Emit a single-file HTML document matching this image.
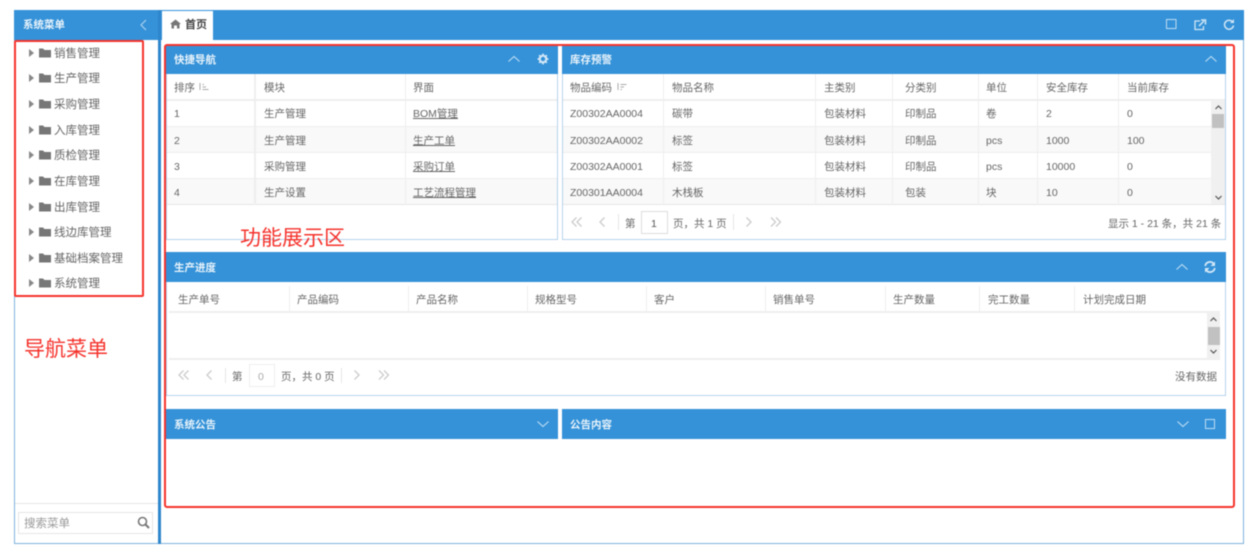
<!DOCTYPE html>
<html lang="zh">
<head>
<meta charset="utf-8">
<title>首页</title>
<style>
html,body{margin:0;padding:0;background:#fff;}
#r{position:relative;width:1254px;height:556px;overflow:hidden;background:#fff;font-family:"Liberation Sans","Noto Sans CJK SC",sans-serif;font-size:10.5px;color:#666;filter:blur(.5px);}
#r div,#r span.t,#r svg{position:absolute;}
.t{position:absolute;line-height:16px;white-space:nowrap;margin-top:1px;}
.b{background:#3592d8;}
.w{color:#e8f3fb;font-weight:bold;font-size:10.5px;}
.m{font-size:11.5px;color:#666;margin-top:1px;}
.l{background:#e6e6e6;}
.u{text-decoration:underline;}
.h{background:#eee;}
.z{background:#f9f9f9;}
svg{overflow:visible;fill:none;}
</style>
</head>
<body>
<div id="r">
<!-- outer frame -->
<div style="left:14px;top:10px;width:1228px;height:532px;border:1px solid #7fb2dc;"></div>
<div class="b" style="left:14px;top:10px;width:144px;height:30px;"></div>
<div style="left:158px;top:10px;width:3px;height:534px;background:#2e86cc;"></div>
<div class="b" style="left:161px;top:10px;width:1083px;height:30px;"></div>
<div style="left:162px;top:11px;width:51px;height:29px;background:#fff;"></div>

<span class="t w" style="left:23px;top:16px;">系统菜单</span>
<svg style="left:139px;top:19px;" width="9" height="12"><path d="M7 1L2 6l5 5" stroke="#a9d0ee" stroke-width="1.2"/></svg>
<svg style="left:170px;top:19px;" width="12" height="10"><path d="M0 5L5.500 0.500 11 5H9.500V9.500H7V6.500H4V9.500H1.500V5Z" fill="#777"/></svg>
<span class="t" style="left:185px;top:16px;font-weight:bold;color:#444;font-size:11px;">首页</span>
<svg style="left:1166px;top:19px;" width="12" height="11"><rect x=".5" y=".5" width="9.500" height="9" stroke="#bcdcf3"/></svg>
<svg style="left:1194px;top:19px;" width="13" height="12"><path d="M6 2H1V10.500H9.500V7" stroke="#cfe5f6" stroke-width="1.300"/><path d="M5 7L10 2M7 1h4.500v4.500" stroke="#cfe5f6" stroke-width="1.500"/></svg>
<svg style="left:1223px;top:19px;" width="12" height="12"><path d="M9.800 3.200A4.500 4.500 0 1 0 10.500 6.500" stroke="#cfe5f6" stroke-width="1.500"/><path d="M7 4H11V0Z" fill="#cfe5f6"/></svg>

<!-- sidebar menu -->
<span class="t m" style="left:54px;top:45px;">销售管理</span>
<span class="t m" style="left:54px;top:70px;">生产管理</span>
<span class="t m" style="left:54px;top:96px;">采购管理</span>
<span class="t m" style="left:54px;top:122px;">入库管理</span>
<span class="t m" style="left:54px;top:147px;">质检管理</span>
<span class="t m" style="left:54px;top:173px;">在库管理</span>
<span class="t m" style="left:54px;top:199px;">出库管理</span>
<span class="t m" style="left:54px;top:224px;">线边库管理</span>
<span class="t m" style="left:54px;top:250px;">基础档案管理</span>
<span class="t m" style="left:54px;top:275px;">系统管理</span>
<svg style="left:28px;top:48px;" width="24" height="10"><path d="M1 1l5 4-5 4z" fill="#888"/><path d="M11 .5h4l1.500 1.500H23V9.500H11z" fill="#777"/></svg>
<svg style="left:28px;top:73px;" width="24" height="10"><path d="M1 1l5 4-5 4z" fill="#888"/><path d="M11 .5h4l1.500 1.500H23V9.500H11z" fill="#777"/></svg>
<svg style="left:28px;top:99px;" width="24" height="10"><path d="M1 1l5 4-5 4z" fill="#888"/><path d="M11 .5h4l1.500 1.500H23V9.500H11z" fill="#777"/></svg>
<svg style="left:28px;top:125px;" width="24" height="10"><path d="M1 1l5 4-5 4z" fill="#888"/><path d="M11 .5h4l1.500 1.500H23V9.500H11z" fill="#777"/></svg>
<svg style="left:28px;top:150px;" width="24" height="10"><path d="M1 1l5 4-5 4z" fill="#888"/><path d="M11 .5h4l1.500 1.500H23V9.500H11z" fill="#777"/></svg>
<svg style="left:28px;top:176px;" width="24" height="10"><path d="M1 1l5 4-5 4z" fill="#888"/><path d="M11 .5h4l1.500 1.500H23V9.500H11z" fill="#777"/></svg>
<svg style="left:28px;top:202px;" width="24" height="10"><path d="M1 1l5 4-5 4z" fill="#888"/><path d="M11 .5h4l1.500 1.500H23V9.500H11z" fill="#777"/></svg>
<svg style="left:28px;top:227px;" width="24" height="10"><path d="M1 1l5 4-5 4z" fill="#888"/><path d="M11 .5h4l1.500 1.500H23V9.500H11z" fill="#777"/></svg>
<svg style="left:28px;top:253px;" width="24" height="10"><path d="M1 1l5 4-5 4z" fill="#888"/><path d="M11 .5h4l1.500 1.500H23V9.500H11z" fill="#777"/></svg>
<svg style="left:28px;top:278px;" width="24" height="10"><path d="M1 1l5 4-5 4z" fill="#888"/><path d="M11 .5h4l1.500 1.500H23V9.500H11z" fill="#777"/></svg>

<span class="t" style="left:24px;top:336px;font-size:21px;line-height:26px;color:#f5332d;">导航菜单</span>

<div class="l" style="left:15px;top:503px;width:143px;height:1px;"></div>
<div style="left:18px;top:512px;width:133px;height:20px;border:2px solid #e6e6e6;border-width:1.500px;"></div>
<span class="t" style="left:24px;top:515px;font-size:11.5px;color:#999;">搜索菜单</span>
<svg style="left:137px;top:516px;" width="13" height="13"><circle cx="5.500" cy="5.500" r="4" stroke="#777" stroke-width="1.600"/><path d="M8.500 8.500L12 12" stroke="#777" stroke-width="2"/></svg>

<!-- panel 1 -->
<div style="left:166px;top:46px;width:390px;height:193px;border:1px solid #b5d3ec;border-top:0;"></div>
<div class="b" style="left:166px;top:46px;width:392px;height:28px;"></div>
<span class="t w" style="left:174px;top:51px;">快捷导航</span>
<svg style="left:508px;top:55px;" width="12" height="8"><path d="M.5 6.500L6 1.500l5.500 5" stroke="#bcdcf3" stroke-width="1.100"/></svg>
<svg style="left:537px;top:53px;" width="12" height="12"><circle cx="6" cy="6" r="3.300" stroke="#d3e7f7" stroke-width="2.200"/><path d="M6 .5v2M6 9.500v2M.5 6h2M9.500 6h2M2.100 2.100l1.400 1.400M8.500 8.500l1.400 1.400M2.100 9.900l1.400-1.400M8.500 3.500l1.400-1.400" stroke="#d3e7f7" stroke-width="1.500"/></svg>

<div class="z" style="left:167px;top:126px;width:390px;height:27px;"></div>
<div class="z" style="left:167px;top:179px;width:390px;height:26px;"></div>
<div class="h" style="left:167px;top:99px;width:390px;height:2px;"></div>
<div class="h" style="left:167px;top:126px;width:390px;height:1px;"></div>
<div class="h" style="left:167px;top:152px;width:390px;height:1px;"></div>
<div class="h" style="left:167px;top:178px;width:390px;height:1px;"></div>
<div class="l" style="left:167px;top:204px;width:390px;height:1px;"></div>
<div class="h" style="left:254px;top:74px;width:2px;height:131px;"></div>
<div class="h" style="left:405px;top:74px;width:1px;height:131px;"></div>

<span class="t" style="left:174px;top:79px;">排序</span>
<svg style="left:199px;top:83px;" width="10" height="8"><path d="M1 0v7M3.500 1.500H5M3.500 4H7M3.500 6.500H9.500" stroke="#aaa"/></svg>
<span class="t" style="left:264px;top:79px;">模块</span>
<span class="t" style="left:413px;top:79px;">界面</span>
<span class="t" style="left:174px;top:105px;">1</span>
<span class="t" style="left:264px;top:105px;">生产管理</span>
<span class="t u" style="left:413px;top:105px;">BOM管理</span>
<span class="t" style="left:174px;top:132px;">2</span>
<span class="t" style="left:264px;top:132px;">生产管理</span>
<span class="t u" style="left:413px;top:132px;">生产工单</span>
<span class="t" style="left:174px;top:158px;">3</span>
<span class="t" style="left:264px;top:158px;">采购管理</span>
<span class="t u" style="left:413px;top:158px;">采购订单</span>
<span class="t" style="left:174px;top:184px;">4</span>
<span class="t" style="left:264px;top:184px;">生产设置</span>
<span class="t u" style="left:413px;top:184px;">工艺流程管理</span>

<span class="t" style="left:240px;top:225px;font-size:21px;line-height:26px;color:#f5332d;">功能展示区</span>

<!-- panel 2 -->
<div style="left:562px;top:46px;width:662px;height:193px;border:1px solid #b5d3ec;border-top:0;"></div>
<div class="b" style="left:562px;top:46px;width:664px;height:28px;"></div>
<span class="t w" style="left:570px;top:51px;">库存预警</span>
<svg style="left:1205px;top:55px;" width="12" height="8"><path d="M.5 6.500L6 1.500l5.500 5" stroke="#bcdcf3" stroke-width="1.100"/></svg>

<div class="z" style="left:563px;top:126px;width:648px;height:27px;"></div>
<div class="z" style="left:563px;top:179px;width:648px;height:26px;"></div>
<div class="h" style="left:563px;top:99px;width:662px;height:2px;"></div>
<div class="h" style="left:563px;top:126px;width:648px;height:1px;"></div>
<div class="h" style="left:563px;top:152px;width:648px;height:1px;"></div>
<div class="h" style="left:563px;top:178px;width:648px;height:1px;"></div>
<div class="l" style="left:563px;top:204px;width:662px;height:1px;"></div>
<div class="h" style="left:663px;top:74px;width:1px;height:131px;"></div>
<div class="h" style="left:815px;top:74px;width:1px;height:131px;"></div>
<div class="h" style="left:892px;top:74px;width:1px;height:131px;"></div>
<div class="h" style="left:978px;top:74px;width:1px;height:131px;"></div>
<div class="h" style="left:1037px;top:74px;width:1px;height:131px;"></div>
<div class="h" style="left:1118px;top:74px;width:1px;height:131px;"></div>
<!-- scrollbar -->
<div style="left:1211px;top:100px;width:14px;height:104px;background:#f0f0f0;"></div>
<div style="left:1212px;top:114px;width:12px;height:14px;background:#c1c1c1;"></div>
<svg style="left:1215px;top:105px;" width="7" height="5"><path d="M.5 4L3.500 1l3 3" stroke="#555" stroke-width="1.200"/></svg>
<svg style="left:1215px;top:195px;" width="7" height="5"><path d="M.5 1L3.500 4l3-3" stroke="#555" stroke-width="1.200"/></svg>

<span class="t" style="left:570px;top:79px;">物品编码</span>
<svg style="left:617px;top:83px;" width="10" height="8"><path d="M1 0v7M3.500 1.500H9.500M3.500 4H7M3.500 6.500H5" stroke="#aaa"/></svg>
<span class="t" style="left:672px;top:79px;">物品名称</span>
<span class="t" style="left:824px;top:79px;">主类别</span>
<span class="t" style="left:905px;top:79px;">分类别</span>
<span class="t" style="left:986px;top:79px;">单位</span>
<span class="t" style="left:1046px;top:79px;">安全库存</span>
<span class="t" style="left:1127px;top:79px;">当前库存</span>

<span class="t" style="left:570px;top:105px;">Z00302AA0004</span>
<span class="t" style="left:672px;top:105px;">碳带</span>
<span class="t" style="left:824px;top:105px;">包装材料</span>
<span class="t" style="left:905px;top:105px;">印制品</span>
<span class="t" style="left:986px;top:105px;">卷</span>
<span class="t" style="left:1046px;top:105px;">2</span>
<span class="t" style="left:1127px;top:105px;">0</span>

<span class="t" style="left:570px;top:132px;">Z00302AA0002</span>
<span class="t" style="left:672px;top:132px;">标签</span>
<span class="t" style="left:824px;top:132px;">包装材料</span>
<span class="t" style="left:905px;top:132px;">印制品</span>
<span class="t" style="left:986px;top:132px;">pcs</span>
<span class="t" style="left:1046px;top:132px;">1000</span>
<span class="t" style="left:1127px;top:132px;">100</span>

<span class="t" style="left:570px;top:158px;">Z00302AA0001</span>
<span class="t" style="left:672px;top:158px;">标签</span>
<span class="t" style="left:824px;top:158px;">包装材料</span>
<span class="t" style="left:905px;top:158px;">印制品</span>
<span class="t" style="left:986px;top:158px;">pcs</span>
<span class="t" style="left:1046px;top:158px;">10000</span>
<span class="t" style="left:1127px;top:158px;">0</span>

<span class="t" style="left:570px;top:184px;">Z00301AA0004</span>
<span class="t" style="left:672px;top:184px;">木栈板</span>
<span class="t" style="left:824px;top:184px;">包装材料</span>
<span class="t" style="left:905px;top:184px;">包装</span>
<span class="t" style="left:986px;top:184px;">块</span>
<span class="t" style="left:1046px;top:184px;">10</span>
<span class="t" style="left:1127px;top:184px;">0</span>

<!-- pager 1 -->
<svg style="left:571px;top:217px;" width="12" height="10"><path d="M5.500 .5L1 5l4.500 4.500M10.500 .5L6 5l4.500 4.500" stroke="#ccc" stroke-width="1.300"/></svg>
<svg style="left:598px;top:217px;" width="8" height="10"><path d="M6.500 .5L2 5l4.500 4.500" stroke="#ccc" stroke-width="1.300"/></svg>
<div class="l" style="left:618px;top:214px;width:1px;height:16px;"></div>
<span class="t" style="left:625px;top:215px;">第</span>
<div style="left:641px;top:211px;width:25px;height:21px;border:1px solid #ddd;"></div>
<span class="t" style="left:651px;top:215px;color:#555;">1</span>
<span class="t" style="left:673px;top:215px;">页，共 1 页</span>
<div class="l" style="left:733px;top:214px;width:1px;height:16px;"></div>
<svg style="left:745px;top:217px;" width="8" height="10"><path d="M1.500 .5L6 5l-4.500 4.500" stroke="#ccc" stroke-width="1.300"/></svg>
<svg style="left:770px;top:217px;" width="12" height="10"><path d="M1 .5L5.500 5 1 9.500M6 .5L10.500 5 6 9.500" stroke="#ccc" stroke-width="1.300"/></svg>
<span class="t" style="left:1108px;top:215px;">显示 1 - 21 条，共 21 条</span>

<!-- panel 3 -->
<div style="left:166px;top:252px;width:1058px;height:143px;border:1px solid #b5d3ec;border-top:0;"></div>
<div class="b" style="left:166px;top:252px;width:1060px;height:30px;"></div>
<span class="t w" style="left:174px;top:259px;">生产进度</span>
<svg style="left:1176px;top:263px;" width="12" height="8"><path d="M.5 6.500L6 1.500l5.500 5" stroke="#bcdcf3" stroke-width="1.100"/></svg>
<svg style="left:1204px;top:261px;" width="12" height="12"><path d="M1.200 5A4.800 4.800 0 0 1 9.500 2.500M10.800 7A4.800 4.800 0 0 1 2.500 9.500" stroke="#d3e7f7" stroke-width="1.800"/><path d="M11 .5V5H6.500ZM1 11.500V7H5.500Z" fill="#d3e7f7"/></svg>

<div class="h" style="left:169px;top:311px;width:1051px;height:2px;"></div>
<div class="h" style="left:169px;top:358px;width:1051px;height:2px;"></div>
<div class="h" style="left:289px;top:286px;width:1px;height:26px;"></div>
<div class="h" style="left:408px;top:286px;width:1px;height:26px;"></div>
<div class="h" style="left:527px;top:286px;width:1px;height:26px;"></div>
<div class="h" style="left:646px;top:286px;width:1px;height:26px;"></div>
<div class="h" style="left:765px;top:286px;width:1px;height:26px;"></div>
<div class="h" style="left:885px;top:286px;width:1px;height:26px;"></div>
<div class="h" style="left:979px;top:286px;width:1px;height:26px;"></div>
<div class="h" style="left:1074px;top:286px;width:1px;height:26px;"></div>
<span class="t" style="left:178px;top:291px;">生产单号</span>
<span class="t" style="left:297px;top:291px;">产品编码</span>
<span class="t" style="left:416px;top:291px;">产品名称</span>
<span class="t" style="left:535px;top:291px;">规格型号</span>
<span class="t" style="left:654px;top:291px;">客户</span>
<span class="t" style="left:773px;top:291px;">销售单号</span>
<span class="t" style="left:893px;top:291px;">生产数量</span>
<span class="t" style="left:988px;top:291px;">完工数量</span>
<span class="t" style="left:1083px;top:291px;">计划完成日期</span>
<!-- scrollbar -->
<div style="left:1207px;top:312px;width:13px;height:47px;background:#f0f0f0;"></div>
<div style="left:1208px;top:327px;width:12px;height:18px;background:#c1c1c1;"></div>
<svg style="left:1210px;top:317px;" width="7" height="5"><path d="M.5 4L3.500 1l3 3" stroke="#555" stroke-width="1.200"/></svg>
<svg style="left:1210px;top:349px;" width="7" height="5"><path d="M.5 1L3.500 4l3-3" stroke="#555" stroke-width="1.200"/></svg>

<!-- pager 2 -->
<svg style="left:178px;top:370px;" width="12" height="10"><path d="M5.500 .5L1 5l4.500 4.500M10.500 .5L6 5l4.500 4.500" stroke="#ccc" stroke-width="1.300"/></svg>
<svg style="left:205px;top:370px;" width="8" height="10"><path d="M6.500 .5L2 5l4.500 4.500" stroke="#ccc" stroke-width="1.300"/></svg>
<div class="l" style="left:225px;top:368px;width:1px;height:15px;"></div>
<span class="t" style="left:232px;top:368px;">第</span>
<div style="left:249px;top:364px;width:24px;height:21px;border:1px solid #eee;"></div>
<span class="t" style="left:258px;top:368px;color:#aaa;">0</span>
<span class="t" style="left:281px;top:368px;">页，共 0 页</span>
<div class="l" style="left:341px;top:368px;width:1px;height:15px;"></div>
<svg style="left:353px;top:370px;" width="8" height="10"><path d="M1.500 .5L6 5l-4.500 4.500" stroke="#ccc" stroke-width="1.300"/></svg>
<svg style="left:378px;top:370px;" width="12" height="10"><path d="M1 .5L5.500 5 1 9.500M6 .5L10.500 5 6 9.500" stroke="#ccc" stroke-width="1.300"/></svg>
<span class="t" style="left:1175px;top:368px;">没有数据</span>

<!-- panel 4 & 5 -->
<div class="b" style="left:166px;top:409px;width:392px;height:30px;"></div>
<span class="t w" style="left:174px;top:416px;">系统公告</span>
<svg style="left:537px;top:420px;" width="12" height="8"><path d="M.5 1.500L6 6.500l5.500-5" stroke="#bcdcf3" stroke-width="1.100"/></svg>
<div class="b" style="left:562px;top:409px;width:664px;height:30px;"></div>
<span class="t w" style="left:570px;top:416px;">公告内容</span>
<svg style="left:1177px;top:420px;" width="12" height="8"><path d="M.5 1.500L6 6.500l5.500-5" stroke="#bcdcf3" stroke-width="1.100"/></svg>
<svg style="left:1205px;top:419px;" width="11" height="11"><rect x=".5" y=".5" width="9" height="9" stroke="#bcdcf3"/></svg>

<!-- annotation boxes -->
<div style="left:14px;top:40px;width:126px;height:253px;border:2px solid #f5332d;border-radius:2px;"></div>
<div style="left:164px;top:44px;width:1067px;height:460px;border:2px solid #f5332d;border-radius:3px;"></div>
</div>
</body>
</html>
